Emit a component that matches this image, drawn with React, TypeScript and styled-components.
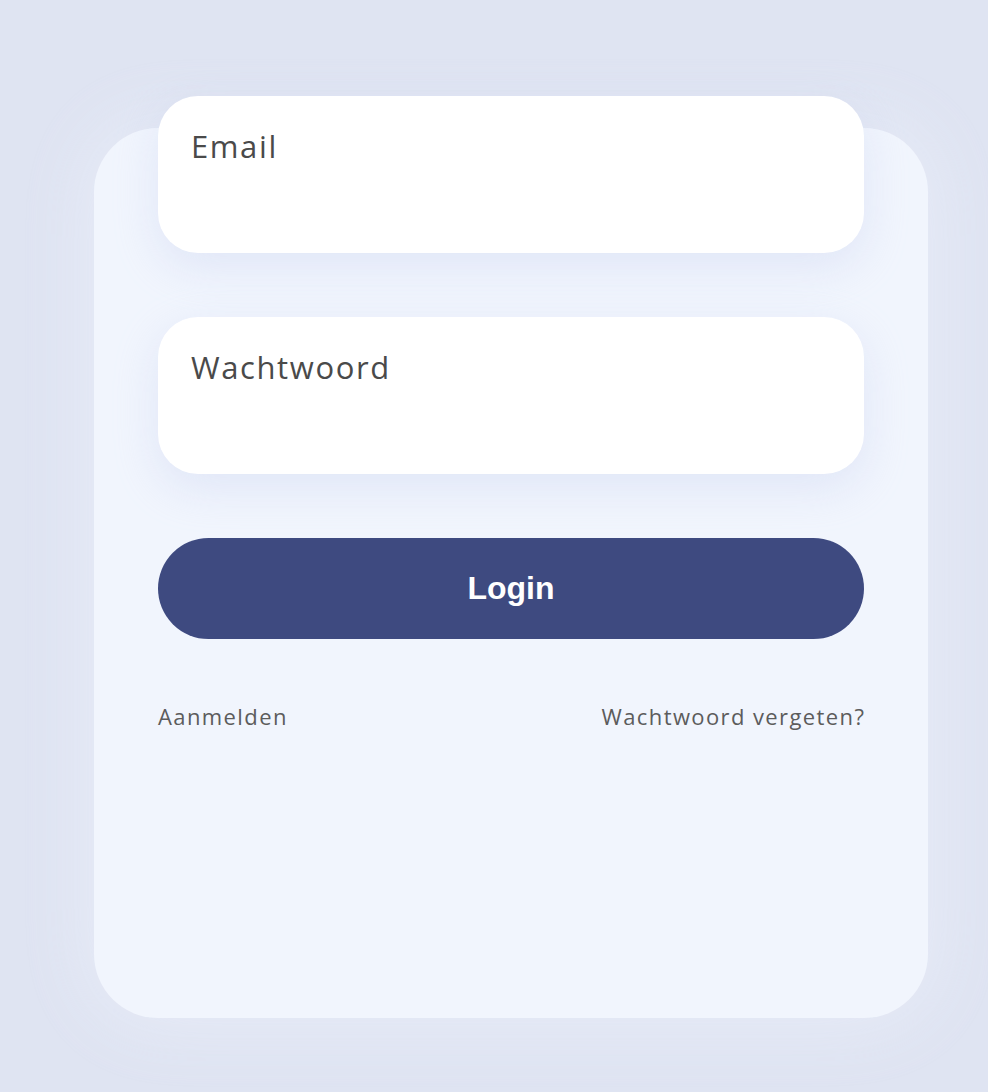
import styled, { createGlobalStyle } from "styled-components";

const GlobalStyle = createGlobalStyle`
  html, body {
    margin: 0;
    padding: 0;
    background: #dfe4f2;
  }
  * {
    box-sizing: border-box;
  }
`;

const Page = styled.div`
  width: 988px;
  height: 1092px;
  overflow: hidden;
  padding: 128px 0 0 94px;
`;

const Card = styled.div`
  width: 834px;
  height: 890px;
  padding: 0 64px;
  border-radius: 64px;
  background: #f1f5fd;
  box-shadow: 0 0 70px 10px rgba(236, 241, 252, 0.55);
  display: flex;
  flex-direction: column;
`;

const Form = styled.form`
  margin-top: -32px;
  display: flex;
  flex-direction: column;
  gap: 64px;
`;

const Field = styled.label`
  display: block;
  height: 157px;
  padding: 29px 33px;
  border-radius: 40px;
  background: #ffffff;
  box-shadow: 0 14px 44px rgba(190, 200, 236, 0.32);
  cursor: text;
`;

const FieldLabel = styled.span`
  font-family: "Open Sans", "Liberation Sans", sans-serif;
  font-size: 31px;
  font-weight: 400;
  letter-spacing: 1.6px;
  color: #4a4a4a;
`;

const LoginButton = styled.button`
  height: 101px;
  border: none;
  border-radius: 51px;
  background: #3e4a80;
  color: #ffffff;
  font-family: "Liberation Sans", Arial, sans-serif;
  font-size: 32px;
  font-weight: 700;
  cursor: pointer;
`;

const LinksRow = styled.div`
  margin-top: 62px;
  display: flex;
  justify-content: space-between;
  align-items: center;
`;

const TextLink = styled.a`
  font-family: "Open Sans", "Liberation Sans", sans-serif;
  font-size: 22px;
  letter-spacing: 1.4px;
  color: #5c5c5c;
  text-decoration: none;
  cursor: pointer;
  &:last-child {
    margin-right: -1.4px;
  }
`;

export default function App() {
  return (
    <>
      <GlobalStyle />
      <Page>
        <Card>
          <Form onSubmit={(e) => e.preventDefault()}>
            <Field>
              <FieldLabel>Email</FieldLabel>
            </Field>
            <Field>
              <FieldLabel>Wachtwoord</FieldLabel>
            </Field>
            <LoginButton type="submit">Login</LoginButton>
          </Form>
          <LinksRow>
            <TextLink>Aanmelden</TextLink>
            <TextLink>Wachtwoord vergeten?</TextLink>
          </LinksRow>
        </Card>
      </Page>
    </>
  );
}
